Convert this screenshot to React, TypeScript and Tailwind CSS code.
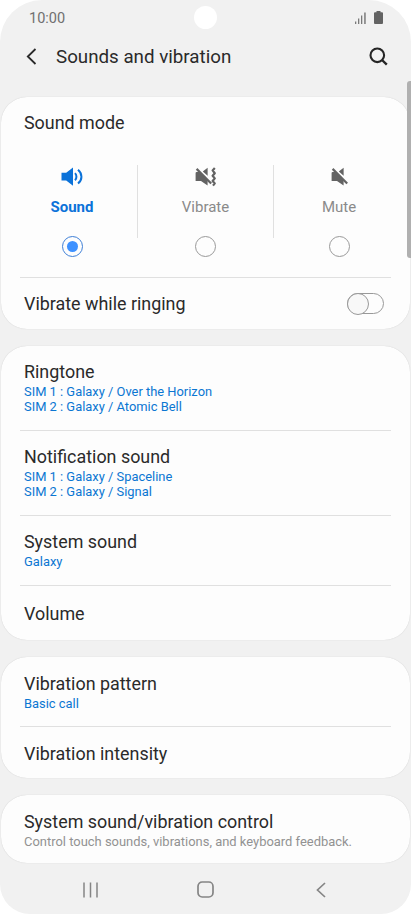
import type { ReactNode } from "react";

const SoundIcon = () => (
  <svg width="22" height="20" viewBox="0 0 22 20" fill="none">
    <path d="M0.5 5.8H5.2L12 0.6V18.8L5.2 13.6H0.5Z" fill="#0b72d9" />
    <path
      d="M14 6.1C15.9 8 15.9 11.4 14 13.3M17 2.8C21.6 6.6 21.6 12.8 17 16.6"
      stroke="#0b72d9"
      strokeWidth="2"
    />
  </svg>
);

const MutedSpeaker = () => (
  <>
    <path
      d="M1.7 4.9H4L12.6 13.2V18.6L6 14H0.6V6Q0.6 4.9 1.7 4.9Z"
      fill="#636363"
    />
    <path d="M7.8 4.6L12.6 0.8V8.8Z" fill="#636363" />
    <path d="M1.6 1.9L16.2 16.5" stroke="#636363" strokeWidth="2.2" />
  </>
);

const VibrateIcon = () => (
  <svg width="22" height="20" viewBox="0 0 22 20" fill="none">
    <MutedSpeaker />
    <path
      d="M19.8 1L17.6 3.4L19.8 6.2L17.6 8.8L19.8 11.4L17.6 14L19.8 16.4L18 18.6"
      stroke="#636363"
      strokeWidth="2.2"
      strokeLinejoin="round"
    />
  </svg>
);

const MuteIcon = () => (
  <svg width="17" height="20" viewBox="0 0 17 20" fill="none">
    <MutedSpeaker />
  </svg>
);

const modes = [
  { label: "Sound", icon: <SoundIcon />, selected: true },
  { label: "Vibrate", icon: <VibrateIcon />, selected: false },
  { label: "Mute", icon: <MuteIcon />, selected: false },
];

const Card = ({ children }: { children: ReactNode }) => (
  <section className="mx-px rounded-[26px] bg-[#fdfdfd] shadow-[0_0_1px_rgba(0,0,0,0.2)]">
    {children}
  </section>
);

const Divider = () => <div className="mx-[19px] h-px bg-[#e0e0e0]" />;

const Title = ({ children }: { children: ReactNode }) => (
  <div className="text-[17.9px] leading-6">{children}</div>
);

const Sub = ({ children, muted }: { children: ReactNode; muted?: boolean }) => (
  <div
    className={
      muted
        ? "text-[12.95px] leading-[15px] text-[#929292]"
        : "text-[12.9px] leading-[15px] text-[#0b76d2]"
    }
  >
    {children}
  </div>
);

const App = () => {
  return (
    <div className="h-[914px] w-[411px] overflow-hidden bg-white font-[Roboto,sans-serif] text-[#2a2a2a]">
      <div className="relative flex h-full flex-col overflow-hidden rounded-t-[42px] rounded-b-[30px] bg-[#f1f1f1]">
        <div className="flex h-9 items-center justify-between px-7">
          <span className="w-[87px] pt-[2px] pl-px text-[14.5px] text-[#707070]">10:00</span>
          <span className="size-[23px] rounded-full bg-white" />
          <div className="flex w-[87px] items-center justify-end gap-2">
            <svg width="11" height="12" viewBox="0 0 11 12" fill="#7a7a7a">
              <path d="M0 9.5H1.3V12H0ZM3 6.5H4.3V12H3ZM6 3.5H7.3V12H6ZM9.2 0.5H10.7V12H9.2Z" />
            </svg>
            <svg width="9" height="13" viewBox="0 0 9 13" fill="#636363">
              <path d="M2.5 0H6.5V1.3H8Q9 1.3 9 2.3V12Q9 13 8 13H1Q0 13 0 12V2.3Q0 1.3 1 1.3H2.5Z" />
            </svg>
          </div>
        </div>

        <header className="flex h-[42px] items-center pt-px pr-[23px] pl-[26px]">
          <svg width="11" height="17" viewBox="0 0 11 17" fill="none">
            <path d="M9.5 1L1.8 8.5L9.5 16" stroke="#2a2a2a" strokeWidth="1.8" />
          </svg>
          <h1 className="ml-[19px] flex-1 pt-px text-[18.75px]">Sounds and vibration</h1>
          <svg width="19" height="19" viewBox="0 0 19 19" fill="none" stroke="#262626">
            <circle cx="8.3" cy="8.3" r="6.8" strokeWidth="2.1" />
            <path d="M13 13L17.8 17.6" strokeWidth="2.4" />
          </svg>
        </header>

        <main className="mt-[21px] flex flex-col gap-[17px] pb-[2px]">
          <Card>
            <div className="h-[68px] px-[23px] pt-[14px]">
              <Title>Sound mode</Title>
            </div>
            <div className="flex justify-center">
              {modes.map((mode) => (
                <div
                  key={mode.label}
                  className="flex h-28 w-[130px] flex-col items-center nth-2:w-[137px] nth-2:[&>div:first-child]:border-x nth-2:[&>div:first-child]:border-[#e0e0e0]"
                >
                  <div className="flex h-[73px] w-full flex-col items-center">
                    <div className="mt-[2px] h-5">{mode.icon}</div>
                    <div
                      className={
                        mode.selected
                          ? "mt-[10px] text-[15px] leading-5 font-bold text-[#0b72d9]"
                          : "mt-[10px] text-[15px] leading-5 text-[#8a8a8a]"
                      }
                    >
                      {mode.label}
                    </div>
                  </div>
                  <div
                    className={
                      mode.selected
                        ? "-mt-[2px] flex size-[21px] items-center justify-center rounded-full border border-[#3e7fd6]"
                        : "-mt-[2px] size-[21px] rounded-full border border-[#999]"
                    }
                  >
                    {mode.selected && (
                      <span className="size-[11px] rounded-full bg-[#3e91ff]" />
                    )}
                  </div>
                </div>
              ))}
            </div>
            <Divider />
            <div className="flex h-[51px] items-center justify-between pr-[26px] pl-[23px]">
              <Title>Vibrate while ringing</Title>
              <span className="flex h-[21px] w-[37px] items-center rounded-full border border-[#999]">
                <span className="-ml-px size-[22px] shrink-0 rounded-full border border-[#999] bg-[#f8f8f8]" />
              </span>
            </div>
          </Card>

          <Card>
            <div className="h-[84px] px-[23px] pt-[14px]">
              <Title>Ringtone</Title>
              <Sub>SIM 1 : Galaxy / Over the Horizon</Sub>
              <Sub>SIM 2 : Galaxy / Atomic Bell</Sub>
            </div>
            <Divider />
            <div className="h-[84px] px-[23px] pt-[14px]">
              <Title>Notification sound</Title>
              <Sub>SIM 1 : Galaxy / Spaceline</Sub>
              <Sub>SIM 2 : Galaxy / Signal</Sub>
            </div>
            <Divider />
            <div className="h-[69px] px-[23px] pt-[14px]">
              <Title>System sound</Title>
              <Sub>Galaxy</Sub>
            </div>
            <Divider />
            <div className="flex h-[54px] items-center px-[23px] pt-px">
              <Title>Volume</Title>
            </div>
          </Card>

          <Card>
            <div className="h-[69px] px-[23px] pt-[15px]">
              <Title>Vibration pattern</Title>
              <Sub>Basic call</Sub>
            </div>
            <Divider />
            <div className="flex h-[51px] items-center px-[23px] pt-[2px]">
              <Title>Vibration intensity</Title>
            </div>
          </Card>

          <Card>
            <div className="h-[68px] px-[23px] pt-[15px]">
              <Title>System sound/vibration control</Title>
              <Sub muted>Control touch sounds, vibrations, and keyboard feedback.</Sub>
            </div>
          </Card>
        </main>

        <nav className="flex h-[50px] items-center justify-between pr-[85px] pl-[83px]">
          <svg width="15" height="16" viewBox="0 0 15 16" stroke="#858585" strokeWidth="1.5">
            <path d="M1 0.5V15.5M7.5 0.5V15.5M14 0.5V15.5" />
          </svg>
          <svg
            className="-ml-1"
            width="17"
            height="17"
            viewBox="0 0 17 17"
            fill="none"
            stroke="#858585"
          >
            <rect x="1" y="1" width="15" height="15" rx="4.2" strokeWidth="1.7" />
          </svg>
          <svg width="10" height="16" viewBox="0 0 10 16" fill="none" stroke="#858585">
            <path d="M9 1L1.5 8L9 15" strokeWidth="1.7" />
          </svg>
        </nav>

        <div className="absolute top-[81px] -right-[2px] h-[177px] w-[6px] rounded-full bg-[#b0b0b0]" />
      </div>
    </div>
  );
};
export default App;
